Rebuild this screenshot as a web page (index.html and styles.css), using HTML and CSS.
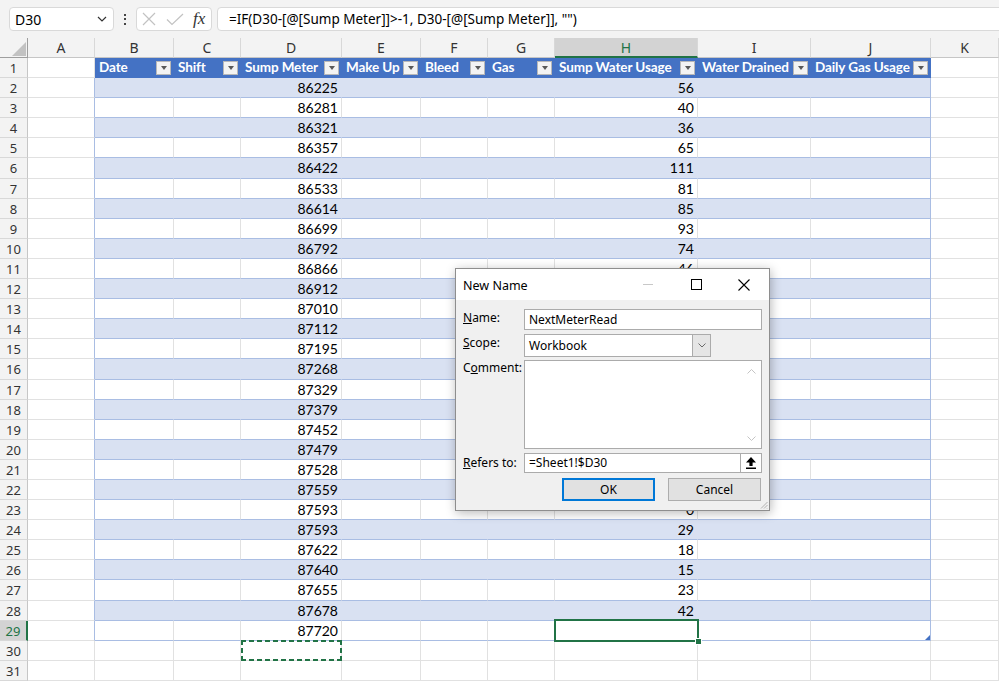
FILE: index.html
```html
<!DOCTYPE html>
<html>
<head>
<meta charset="utf-8">
<title>Excel - New Name</title>
<link rel="stylesheet" href="styles.css">
</head>
<body>
<div class="app">
  <div class="toolbar">
    <div class="namebox"><span class="nb-text">D30</span><svg class="nb-chev" width="10" height="6" viewBox="0 0 10 6"><polyline points="1,1 5,5 9,1" fill="none" stroke="#333" stroke-width="1.2"/></svg></div>
    <div class="vdots"><span></span><span></span><span></span></div>
    <div class="fnbox">
      <svg width="14" height="14" viewBox="0 0 14 14"><path d="M1 1L13 13M13 1L1 13" stroke="#C2C2C2" stroke-width="1.2"/></svg>
      <svg class="chk" width="18" height="13" viewBox="0 0 18 13"><path d="M1 6.5L6 11.5L17 1" fill="none" stroke="#C2C2C2" stroke-width="1.2"/></svg>
      <span class="fx">fx</span>
    </div>
    <div class="formula">=IF(D30-[@[Sump Meter]]&gt;-1, D30-[@[Sump Meter]], "")</div>
  </div>

  <div class="sheet">
    <div class="r hdr"><span class="corner"><svg width="14" height="14" viewBox="0 0 14 14"><polygon points="14,0 14,14 0,14" fill="#C2C2C2"/></svg></span><span>A</span><span>B</span><span>C</span><span>D</span><span>E</span><span>F</span><span>G</span><span class="hsel">H</span><span>I</span><span>J</span><span>K</span></div>
    <div class="r r1"><span class="rh">1</span><span></span><span><span class="tt">Date</span><span class="fb"></span></span><span><span class="tt">Shift</span><span class="fb"></span></span><span><span class="tt">Sump Meter</span><span class="fb"></span></span><span><span class="tt">Make Up</span><span class="fb"></span></span><span><span class="tt">Bleed</span><span class="fb"></span></span><span><span class="tt">Gas</span><span class="fb"></span></span><span><span class="tt">Sump Water Usage</span><span class="fb"></span></span><span><span class="tt">Water Drained</span><span class="fb"></span></span><span><span class="tt">Daily Gas Usage</span><span class="fb"></span></span><span></span></div>
    <div class="r tb b"><span class="rh">2</span><span></span><span></span><span></span><span>86225</span><span></span><span></span><span></span><span>56</span><span></span><span></span><span></span></div>
    <div class="r tb"><span class="rh">3</span><span></span><span></span><span></span><span>86281</span><span></span><span></span><span></span><span>40</span><span></span><span></span><span></span></div>
    <div class="r tb b"><span class="rh">4</span><span></span><span></span><span></span><span>86321</span><span></span><span></span><span></span><span>36</span><span></span><span></span><span></span></div>
    <div class="r tb"><span class="rh">5</span><span></span><span></span><span></span><span>86357</span><span></span><span></span><span></span><span>65</span><span></span><span></span><span></span></div>
    <div class="r tb b"><span class="rh">6</span><span></span><span></span><span></span><span>86422</span><span></span><span></span><span></span><span>111</span><span></span><span></span><span></span></div>
    <div class="r tb"><span class="rh">7</span><span></span><span></span><span></span><span>86533</span><span></span><span></span><span></span><span>81</span><span></span><span></span><span></span></div>
    <div class="r tb b"><span class="rh">8</span><span></span><span></span><span></span><span>86614</span><span></span><span></span><span></span><span>85</span><span></span><span></span><span></span></div>
    <div class="r tb"><span class="rh">9</span><span></span><span></span><span></span><span>86699</span><span></span><span></span><span></span><span>93</span><span></span><span></span><span></span></div>
    <div class="r tb b"><span class="rh">10</span><span></span><span></span><span></span><span>86792</span><span></span><span></span><span></span><span>74</span><span></span><span></span><span></span></div>
    <div class="r tb"><span class="rh">11</span><span></span><span></span><span></span><span>86866</span><span></span><span></span><span></span><span>46</span><span></span><span></span><span></span></div>
    <div class="r tb b"><span class="rh">12</span><span></span><span></span><span></span><span>86912</span><span></span><span></span><span></span><span>98</span><span></span><span></span><span></span></div>
    <div class="r tb"><span class="rh">13</span><span></span><span></span><span></span><span>87010</span><span></span><span></span><span></span><span>102</span><span></span><span></span><span></span></div>
    <div class="r tb b"><span class="rh">14</span><span></span><span></span><span></span><span>87112</span><span></span><span></span><span></span><span>83</span><span></span><span></span><span></span></div>
    <div class="r tb"><span class="rh">15</span><span></span><span></span><span></span><span>87195</span><span></span><span></span><span></span><span>73</span><span></span><span></span><span></span></div>
    <div class="r tb b"><span class="rh">16</span><span></span><span></span><span></span><span>87268</span><span></span><span></span><span></span><span>61</span><span></span><span></span><span></span></div>
    <div class="r tb"><span class="rh">17</span><span></span><span></span><span></span><span>87329</span><span></span><span></span><span></span><span>50</span><span></span><span></span><span></span></div>
    <div class="r tb b"><span class="rh">18</span><span></span><span></span><span></span><span>87379</span><span></span><span></span><span></span><span>73</span><span></span><span></span><span></span></div>
    <div class="r tb"><span class="rh">19</span><span></span><span></span><span></span><span>87452</span><span></span><span></span><span></span><span>27</span><span></span><span></span><span></span></div>
    <div class="r tb b"><span class="rh">20</span><span></span><span></span><span></span><span>87479</span><span></span><span></span><span></span><span>49</span><span></span><span></span><span></span></div>
    <div class="r tb"><span class="rh">21</span><span></span><span></span><span></span><span>87528</span><span></span><span></span><span></span><span>31</span><span></span><span></span><span></span></div>
    <div class="r tb b"><span class="rh">22</span><span></span><span></span><span></span><span>87559</span><span></span><span></span><span></span><span>34</span><span></span><span></span><span></span></div>
    <div class="r tb"><span class="rh">23</span><span></span><span></span><span></span><span>87593</span><span></span><span></span><span></span><span>0</span><span></span><span></span><span></span></div>
    <div class="r tb b"><span class="rh">24</span><span></span><span></span><span></span><span>87593</span><span></span><span></span><span></span><span>29</span><span></span><span></span><span></span></div>
    <div class="r tb"><span class="rh">25</span><span></span><span></span><span></span><span>87622</span><span></span><span></span><span></span><span>18</span><span></span><span></span><span></span></div>
    <div class="r tb b"><span class="rh">26</span><span></span><span></span><span></span><span>87640</span><span></span><span></span><span></span><span>15</span><span></span><span></span><span></span></div>
    <div class="r tb"><span class="rh">27</span><span></span><span></span><span></span><span>87655</span><span></span><span></span><span></span><span>23</span><span></span><span></span><span></span></div>
    <div class="r tb b"><span class="rh">28</span><span></span><span></span><span></span><span>87678</span><span></span><span></span><span></span><span>42</span><span></span><span></span><span></span></div>
    <div class="r tb"><span class="rh sel">29</span><span></span><span></span><span></span><span>87720</span><span></span><span></span><span></span><span class="act"></span><span></span><span class="tend"></span><span></span></div>
    <div class="r"><span class="rh">30</span><span></span><span></span><span></span><span class="copy"></span><span></span><span></span><span></span><span></span><span></span><span></span><span></span></div>
    <div class="r"><span class="rh">31</span><span></span><span></span><span></span><span></span><span></span><span></span><span></span><span></span><span></span><span></span><span></span></div>
  </div>

  <div class="dialog">
    <div class="dtitle">
      <span class="dtitle-text">New Name</span>
      <div class="caps">
        <span class="cap"><svg width="10" height="1" viewBox="0 0 10 1"><rect width="10" height="1" fill="#C8C8C8"/></svg></span>
        <span class="cap"><svg width="11" height="11" viewBox="0 0 11 11"><rect x="0.5" y="0.5" width="10" height="10" fill="none" stroke="#000" stroke-width="1"/></svg></span>
        <span class="cap"><svg width="12" height="12" viewBox="0 0 12 12"><path d="M0.5 0.5L11.5 11.5M11.5 0.5L0.5 11.5" stroke="#000" stroke-width="1.1"/></svg></span>
      </div>
    </div>
    <div class="dbody">
      <div class="frow f-name"><span class="lbl"><u>N</u>ame:</span><div class="field">NextMeterRead</div></div>
      <div class="frow f-scope"><span class="lbl"><u>S</u>cope:</span><div class="combo"><span class="combo-text">Workbook</span><span class="combo-btn"><svg width="8" height="5" viewBox="0 0 8 5"><polyline points="0.5,0.5 4,4 7.5,0.5" fill="none" stroke="#6A6A6A" stroke-width="1"/></svg></span></div></div>
      <div class="frow f-comment"><span class="lbl">C<u>o</u>mment:</span><div class="memo"><div class="vscroll"><svg width="9" height="5" viewBox="0 0 9 5"><polyline points="0.5,4.5 4.5,0.5 8.5,4.5" fill="none" stroke="#C4C4C4" stroke-width="1"/></svg><svg width="9" height="5" viewBox="0 0 9 5"><polyline points="0.5,0.5 4.5,4.5 8.5,0.5" fill="none" stroke="#C4C4C4" stroke-width="1"/></svg></div></div></div>
      <div class="frow f-ref"><span class="lbl"><u>R</u>efers to:</span><div class="refbox"><div class="field ref">=Sheet1!$D30</div><span class="refbtn"><svg width="10" height="12" viewBox="0 0 10 12"><path d="M5 0L10 5.5H6.6V9H3.4V5.5H0Z" fill="#000"/><rect x="0" y="10.5" width="10" height="1.5" fill="#000"/></svg></span></div></div>
      <div class="btns"><span class="btn ok">OK</span><span class="btn">Cancel</span></div>
    </div>
    <svg class="grip" width="8" height="8" viewBox="0 0 8 8"><path d="M7.5 1L1 7.5M7.5 4L4 7.5M7.5 7L7 7.5" stroke="#B0B0B0" stroke-width="1"/></svg>
  </div>
</div>
</body>
</html>
```
FILE: styles.css
```css
html, body {
  margin: 0;
  padding: 0;
  background: #fff;
}
body {
  width: 999px;
  height: 682px;
  overflow: hidden;
  font-family: "Noto Sans", "Open Sans", sans-serif;
}
.app {
  position: relative;
  width: 999px;
  height: 682px;
  overflow: hidden;
}

/* ---------- formula bar ---------- */
.toolbar {
  height: 38px;
  box-sizing: border-box;
  background: #F3F3F3;
  display: flex;
  align-items: flex-start;
  padding: 7px 0 0 9px;
}
.namebox {
  width: 105px;
  height: 24px;
  box-sizing: border-box;
  background: #fff;
  border: 1px solid #D9D9D9;
  border-radius: 4px;
  display: flex;
  align-items: center;
  justify-content: space-between;
  padding: 0 6px 0 5px;
  font-size: 14px;
  color: #000;
}
.vdots {
  width: 22px;
  height: 24px;
  display: flex;
  flex-direction: column;
  align-items: center;
  justify-content: center;
  gap: 2.5px;
}
.vdots span {
  width: 2px;
  height: 2px;
  background: #444;
}
.fnbox {
  width: 76px;
  height: 24px;
  box-sizing: border-box;
  background: #fff;
  border: 1px solid #D9D9D9;
  border-radius: 4px;
  display: flex;
  align-items: center;
  padding-left: 5px;
}
.fnbox .chk {
  margin-left: 10px;
}
.fx {
  margin-left: 9px;
  font-family: "Liberation Serif", "DejaVu Serif", serif;
  font-style: italic;
  font-size: 17px;
  color: #333;
  line-height: 20px;
}
.formula {
  flex: 1;
  margin-left: 5px;
  margin-right: -10px;
  height: 24px;
  box-sizing: border-box;
  background: #fff;
  border: 1px solid #D9D9D9;
  border-radius: 4px;
  padding-left: 11px;
  font-size: 13.5px;
  line-height: 22px;
  color: #000;
  white-space: nowrap;
}

/* ---------- grid ---------- */
.r {
  display: grid;
  grid-template-columns: 28px 67px 79px 67px 101px 79px 67px 67px 143px 113px 120px 68px;
  height: 20.1px;
}
.r > span {
  box-sizing: border-box;
  border-right: 1px solid #E1E1E1;
  border-bottom: 1px solid #E1E1E1;
  font-family: "Lato", "Liberation Sans", sans-serif;
  font-size: 14px;
  line-height: 19px;
  text-align: right;
  padding-right: 3px;
  overflow: hidden;
  white-space: nowrap;
  color: #000;
}
.r > .rh {
  background: #F3F3F3;
  border-right-color: #C6C6C6;
  border-bottom-color: #D8D8D8;
  font-family: "Noto Sans", sans-serif;
  font-size: 13px;
  line-height: 20px;
  text-align: center;
  padding: 0;
  color: #333;
}
.r > .rh.sel {
  background: #D3D3D3;
  color: #217346;
  border-right: 2px solid #217346;
}

.hdr {
  height: 20px;
}
.hdr > span {
  background: #F3F3F3;
  font-family: "Noto Sans", sans-serif;
  font-size: 14px;
  line-height: 19px;
  text-align: center;
  padding: 0;
  color: #333;
  border-right-color: #D8D8D8;
  border-bottom-color: #C6C6C6;
}
.hdr > .hsel {
  background: #D3D3D3;
  color: #217346;
  border-bottom: 2px solid #217346;
}
.hdr > .corner {
  display: flex;
  align-items: flex-end;
  justify-content: flex-end;
  padding: 0 1px 1px 0;
  border-right-color: #9E9E9E;
  border-bottom-color: #9E9E9E;
}

/* table header row */
.r1 > span:nth-child(n+3):nth-child(-n+11) {
  background: #4472C4;
  border-right-color: #4472C4;
  border-bottom-color: #4472C4;
  color: #fff;
  font-weight: 700;
  font-size: 13.5px;
  display: flex;
  align-items: center;
  padding: 0 2px 0 4px;
}
.tt {
  flex: 1;
  min-width: 0;
  overflow: hidden;
  white-space: nowrap;
  text-align: left;
  line-height: 19px;
  letter-spacing: -0.1px;
}
.fb {
  flex: none;
  width: 15px;
  height: 14px;
  box-sizing: border-box;
  background: #F3F3F3;
  border: 1px solid #B8B8B8;
  display: flex;
  align-items: center;
  justify-content: center;
  margin-top: 1px;
}
.fb::after {
  content: "";
  width: 0;
  height: 0;
  border-left: 3.5px solid transparent;
  border-right: 3.5px solid transparent;
  border-top: 4px solid #595959;
}

/* table body */
.tb > span:nth-child(n+3):nth-child(-n+11) {
  border-bottom-color: #A9BDE3;
}
.tb > span:nth-child(2),
.tb > span:nth-child(11) {
  border-right-color: #A9BDE3;
}
.b > span:nth-child(n+3):nth-child(-n+11) {
  background: #D9E1F2;
}
.b > span:nth-child(n+3):nth-child(-n+10) {
  border-right-color: #D9E1F2;
}

/* active cell */
.r > .act {
  position: relative;
  overflow: visible;
}
.act::after {
  content: "";
  position: absolute;
  left: -1px;
  right: -2px;
  top: -2px;
  bottom: -2px;
  border: 2px solid #217346;
  z-index: 2;
}
.act::before {
  content: "";
  position: absolute;
  right: -5px;
  bottom: -5px;
  width: 5px;
  height: 5px;
  background: #217346;
  border: 1px solid #fff;
  z-index: 3;
}
.r > .tend {
  position: relative;
  overflow: visible;
}
.tend::after {
  content: "";
  position: absolute;
  right: 0;
  bottom: 0;
  width: 0;
  height: 0;
  border-left: 5px solid transparent;
  border-bottom: 5px solid #4472C4;
}

/* copy marquee */
.r > .copy {
  position: relative;
  overflow: visible;
}
.copy::after {
  content: "";
  position: absolute;
  left: 0;
  right: -1px;
  top: -1px;
  bottom: -1px;
  z-index: 2;
  background:
    repeating-linear-gradient(90deg, #217346 0 5px, transparent 5px 8px) left top / 100% 2px no-repeat,
    repeating-linear-gradient(90deg, #217346 0 5px, transparent 5px 8px) left bottom / 100% 2px no-repeat,
    repeating-linear-gradient(180deg, #217346 0 5px, transparent 5px 8px) left top / 2px 100% no-repeat,
    repeating-linear-gradient(180deg, #217346 0 5px, transparent 5px 8px) right top / 2px 100% no-repeat;
}

/* ---------- dialog ---------- */
.dialog {
  position: absolute;
  left: 455px;
  top: 268px;
  width: 315px;
  height: 243px;
  box-sizing: border-box;
  border: 1px solid #8E8E8E;
  background: #F0F0F0;
  box-shadow: 1px 2px 10px rgba(0, 0, 0, 0.28);
  font-family: "Noto Sans", "Open Sans", sans-serif;
  font-size: 12px;
  color: #000;
  z-index: 10;
}
.dtitle {
  height: 31px;
  background: #fff;
  display: flex;
  align-items: center;
  justify-content: space-between;
  padding-left: 7px;
}
.dtitle-text {
  font-size: 12.5px;
  padding-top: 2px;
}
.caps {
  display: flex;
  padding-right: 1px;
  height: 31px;
}
.cap {
  width: 48px;
  display: flex;
  align-items: center;
  justify-content: center;
}
.dbody {
  padding: 9px 6px 0 7px;
  display: flex;
  flex-direction: column;
}
.frow {
  display: grid;
  grid-template-columns: 61px 238px;
}
.f-scope { margin-top: 4px; }
.f-comment { margin-top: 3px; }
.f-ref { margin-top: 4px; }
.lbl {
  padding-top: 1px;
  line-height: 16px;
}
.f-comment .lbl { padding-top: 0; }
.f-ref .lbl { padding-top: 2px; }
.field {
  height: 21px;
  box-sizing: border-box;
  background: #fff;
  border: 1px solid #ABABAB;
  padding-left: 4px;
  line-height: 19px;
  white-space: nowrap;
}
.combo {
  width: 187px;
  height: 23px;
  box-sizing: border-box;
  background: #fff;
  border: 1px solid #ABABAB;
  display: flex;
}
.combo-text {
  flex: 1;
  padding-left: 4px;
  line-height: 21px;
}
.combo-btn {
  width: 17px;
  background: #E5E5E5;
  border-left: 1px solid #ABABAB;
  display: flex;
  align-items: center;
  justify-content: center;
}
.memo {
  height: 89px;
  box-sizing: border-box;
  background: #fff;
  border: 1px solid #ABABAB;
  display: flex;
  justify-content: flex-end;
}
.vscroll {
  width: 17px;
  display: flex;
  flex-direction: column;
  justify-content: space-between;
  align-items: center;
  padding: 8px 0 7px;
  margin-right: 1px;
}
.refbox {
  display: flex;
  height: 20px;
}
.field.ref {
  width: 217px;
  height: 20px;
  line-height: 18px;
}
.refbtn {
  width: 21px;
  height: 20px;
  box-sizing: border-box;
  background: #fff;
  border: 1px solid #ABABAB;
  border-left: none;
  display: flex;
  align-items: center;
  justify-content: center;
}
.btns {
  margin-top: 5px;
  display: flex;
  justify-content: flex-end;
  gap: 13px;
  padding-right: 2px;
}
.btn {
  width: 93px;
  height: 23px;
  box-sizing: border-box;
  background: #E1E1E1;
  border: 1px solid #ADADAD;
  display: flex;
  align-items: center;
  justify-content: center;
}
.btn.ok {
  border: 2px solid #0078D7;
}
.grip {
  position: absolute;
  right: 1px;
  bottom: 1px;
}
```
